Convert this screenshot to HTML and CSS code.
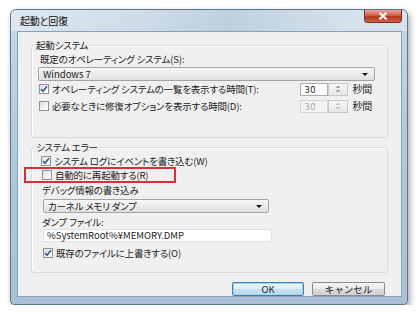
FILE: index.html
```html
<!DOCTYPE html>
<html lang="ja">
<head>
    <meta charset="UTF-8">
    <title>起動と回復</title>
    <link rel="stylesheet" href="styles.css">
</head>
<body>
    <div class="window">
        <!-- Title bar -->
        <div class="titlebar">
            <span class="title">起動と回復</span>
            <div class="close">
                <svg width="10" height="8" viewBox="0 0 10 8"><path d="M1.5 0.8 L8.5 7.2 M8.5 0.8 L1.5 7.2" stroke="#fff" stroke-width="2"/></svg>
            </div>
        </div>

        <div class="client">
            <!-- Startup -->
            <div class="group group-start">
                <div class="group-title">起動システム</div>
                <div class="label">既定のオペレーティング システム(S):</div>
                <div class="combo combo-os"><span>Windows 7</span><i class="arrow"></i></div>
                <div class="row row-first">
                    <span class="check checked"><svg width="8" height="8" viewBox="0 0 8 8"><path d="M1 4 L3 6.2 L7 1.2" stroke="#3d5488" stroke-width="1.6" fill="none"/></svg></span>
                    <span class="row-text">オペレーティング システムの一覧を表示する時間(T):</span>
                    <div class="spin"><span class="spin-val">30</span><span class="spin-btn"><svg width="6" height="8" viewBox="0 0 6 8"><path d="M0.5 3 L3 0.5 L5.5 3 Z M0.5 5 L3 7.5 L5.5 5 Z" fill="#9aa0a6"/></svg></span></div>
                    <span class="unit">秒間</span>
                </div>
                <div class="row row-second">
                    <span class="check"></span>
                    <span class="row-text">必要なときに修復オプションを表示する時間(D):</span>
                    <div class="spin disabled"><span class="spin-val">30</span><span class="spin-btn"><svg width="6" height="8" viewBox="0 0 6 8"><path d="M0.5 3 L3 0.5 L5.5 3 Z M0.5 5 L3 7.5 L5.5 5 Z" fill="#c3c6c9"/></svg></span></div>
                    <span class="unit">秒間</span>
                </div>
            </div>

            <!-- System failure -->
            <div class="group group-error">
                <div class="group-title">システム エラー</div>
                <div class="row row-log">
                    <span class="check checked"><svg width="8" height="8" viewBox="0 0 8 8"><path d="M1 4 L3 6.2 L7 1.2" stroke="#3d5488" stroke-width="1.6" fill="none"/></svg></span>
                    <span class="row-text">システム ログにイベントを書き込む(W)</span>
                </div>
                <div class="row highlight">
                    <span class="check"></span>
                    <span class="row-text">自動的に再起動する(R)</span>
                </div>
                <div class="label sub">デバッグ情報の書き込み</div>
                <div class="combo combo-dump"><span>カーネル メモリ ダンプ</span><i class="arrow"></i></div>
                <div class="label sub dump-label">ダンプ ファイル:</div>
                <div class="textbox">%SystemRoot%¥MEMORY.DMP</div>
                <div class="row row-overwrite">
                    <span class="check checked"><svg width="8" height="8" viewBox="0 0 8 8"><path d="M1 4 L3 6.2 L7 1.2" stroke="#3d5488" stroke-width="1.6" fill="none"/></svg></span>
                    <span class="row-text">既存のファイルに上書きする(O)</span>
                </div>
            </div>

            <div class="buttons">
                <button class="btn btn-default">OK</button>
                <button class="btn">キャンセル</button>
            </div>
        </div>
    </div>
</body>
</html>
```

FILE: styles.css
```css
body {
    margin: 0;
    background: #fff;
    font-family: "Noto Sans CJK JP", "Noto Sans", sans-serif;
    font-size: 9.5px;
    letter-spacing: -0.2px;
    font-feature-settings: "palt";
    color: #222;
}
.window {
    box-sizing: border-box;
    width: 398px;
    height: 296px;
    margin: 9px 0 0 10px;
    padding: 0 5px 0 6px;
    border: 1px solid #5d7690;
    border-radius: 6px 6px 4px 4px;
    background: linear-gradient(180deg, #c9d9e6 0%, #b5cadb 40%, #aac1d5 100%);
    box-shadow: 2px 3px 6px rgba(0, 0, 0, 0.35);
}
.titlebar {
    height: 21px;
    display: flex;
    align-items: center;
    justify-content: space-between;
    margin: 0 -5px 0 -6px;
    padding: 0 5px 0 9px;
    border-radius: 5px 5px 0 0;
    background: linear-gradient(100deg, rgba(255,255,255,0.4) 0%, rgba(255,255,255,0.15) 30%, rgba(120,150,175,0.12) 55%, rgba(255,255,255,0.25) 85%);
}
.title {
    font-size: 10px;
    line-height: 14px;
    color: #111;
}
.close {
    align-self: flex-start;
    width: 38px;
    height: 13px;
    display: flex;
    align-items: center;
    justify-content: center;
    box-sizing: border-box;
    border: 1px solid #7a2d24;
    border-top: none;
    border-radius: 0 0 4px 4px;
    background: linear-gradient(180deg, #e9a699 0%, #d0604c 45%, #b8341f 55%, #d2624a 100%);
}
.client {
    box-sizing: border-box;
    height: 266px;
    padding: 13px 0 0 13px;
    border: 1px solid #8ba1b7;
    background: #f0f0f0;
}
.group {
    box-sizing: border-box;
    width: 357px;
    border: 1px solid #d7dfe4;
    border-radius: 3px;
    box-shadow: inset 1px 1px 0 #fff;
}
.group-start {
    height: 93px;
}
.group-error {
    height: 126px;
    margin-top: 9px;
}
.group-title {
    display: table;
    margin: -8px 0 0 2px;
    padding: 0 2px;
    line-height: 14px;
    background: #f0f0f0;
}
.label {
    line-height: 14px;
    margin-left: 8px;
}
.label.sub {
    margin-left: 10px;
}
.dump-label {
    margin-top: 2px;
}
.combo {
    box-sizing: border-box;
    height: 14px;
    display: flex;
    align-items: center;
    justify-content: space-between;
    padding: 0 6px 0 4px;
    border: 1px solid #a2a4a6;
    border-radius: 2px;
    background: linear-gradient(180deg, #f8f8f8 0%, #ececec 50%, #dfdfdf 100%);
}
.combo span {
    line-height: 12px;
}
.combo-os {
    width: 337px;
    margin: 1px 0 0 6px;
    letter-spacing: 0;
}
.combo-dump {
    width: 226px;
    margin: 2px 0 0 11px;
}
.arrow {
    width: 0;
    height: 0;
    border-left: 3px solid transparent;
    border-right: 3px solid transparent;
    border-top: 3px solid #111;
}
.row {
    display: flex;
    align-items: center;
    height: 14px;
    margin-left: 7px;
}
.row-first {
    margin-top: 1px;
}
.row-second {
    margin-top: 3px;
}
.row-log {
    height: 13px;
    margin-left: 9px;
}
.row-overwrite {
    margin: 4px 0 0 11px;
}
.check {
    box-sizing: border-box;
    width: 10px;
    height: 10px;
    display: flex;
    align-items: center;
    justify-content: center;
    border: 1px solid #8f9296;
    background: linear-gradient(135deg, #d8dadc 0%, #f6f6f6 60%, #fff 100%);
}
.row-text {
    margin-left: 3px;
    line-height: 14px;
    flex: 1;
}
.highlight {
    box-sizing: border-box;
    width: 152px;
    height: 16px;
    margin-left: -8px;
    padding-left: 16px;
    border: 2px solid #d6303a;
}
.spin {
    display: flex;
    height: 13px;
}
.spin-val {
    box-sizing: border-box;
    width: 28px;
    padding-left: 3px;
    line-height: 11px;
    letter-spacing: 0.5px;
    border: 1px solid #abadb3;
    background: #fff;
}
.spin-btn {
    box-sizing: border-box;
    width: 20px;
    display: flex;
    align-items: center;
    justify-content: center;
    border: 1px solid #c6c9cd;
    background: linear-gradient(180deg, #f6f6f6, #e6e6e6);
}
.spin.disabled .spin-val {
    color: #a6a6a6;
    background: #f4f4f4;
    border-color: #d3d5d8;
}
.unit {
    margin: 0 15px 0 4px;
    line-height: 14px;
    font-size: 10px;
}
.textbox {
    box-sizing: border-box;
    width: 229px;
    height: 13px;
    margin-left: 11px;
    padding-left: 3px;
    line-height: 11px;
    letter-spacing: 0;
    border: 1px solid #dfe3e8;
    background: #fff;
}
.buttons {
    display: flex;
    justify-content: flex-end;
    gap: 8px;
    margin: 9px 16px 0 0;
}
.btn {
    box-sizing: border-box;
    width: 73px;
    height: 14px;
    padding: 0;
    font-family: inherit;
    font-size: 9.5px;
    line-height: 12px;
    color: #222;
    border: 1px solid #8a8a8a;
    border-radius: 2px;
    background: linear-gradient(180deg, #f4f4f4 0%, #ebebeb 50%, #dcdcdc 51%, #d0d0d0 100%);
}
.btn-default {
    width: 72px;
    border-color: #3c7fb1;
    background: linear-gradient(180deg, #eef7fc 0%, #dcecf7 50%, #c8e2f3 51%, #bcdcef 100%);
    box-shadow: inset 0 0 0 1px #9fd4f2;
}
```
